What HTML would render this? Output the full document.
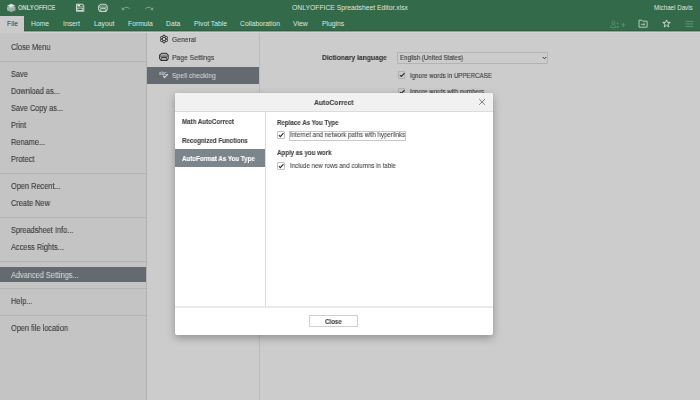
<!DOCTYPE html>
<html><head><meta charset="utf-8">
<style>
*{margin:0;padding:0;box-sizing:border-box}
html,body{width:700px;height:400px;overflow:hidden;background:#cccccc;font-family:"Liberation Sans",sans-serif;position:relative}
.a{position:absolute}
.t{position:absolute;white-space:nowrap;line-height:1;transform-origin:0 0;will-change:transform}
.t.l{will-change:auto}
svg{position:absolute;overflow:visible}
</style></head><body>
<div class="a" style="left:0.00px;top:0.00px;width:700.00px;height:30.00px;background:#336b4a;"></div>
<div class="a" style="left:0.00px;top:30.00px;width:700.00px;height:1.00px;background:#2c6242;"></div>
<div class="a" style="left:0.00px;top:31.00px;width:700.00px;height:1.00px;background:#8ea294;"></div>
<div class="a" style="left:0.00px;top:32.00px;width:700.00px;height:1.00px;background:#d4d4d4;"></div>
<div class="a" style="left:0.00px;top:16.00px;width:24.00px;height:17.00px;background:#cacaca;"></div>
<div class="t" style="left:18.00px;top:5.00px;font-size:6.446px;font-weight:bold;color:#d3ddd6;transform:scaleX(0.9091);">ONLY</div>
<div class="t" style="left:33.70px;top:5.00px;font-size:6.446px;font-weight:bold;color:#c2d1c7;transform:scaleX(0.9091);">OFFICE</div>
<div class="t l" style="left:292.20px;top:4.00px;font-size:7.605px;font-weight:normal;color:#dde6e0;transform:scaleX(0.8929);">ONLYOFFICE Spreadsheet Editor.xlsx</div>
<div class="t l" style="left:654.40px;top:4.00px;font-size:6.989px;font-weight:normal;color:#dde6e0;transform:scaleX(0.8929);">Michael Davis</div>
<div class="t l" style="left:6.75px;top:20.00px;font-size:7.605px;font-weight:normal;color:#3a3a3a;transform:scaleX(0.8929);">File</div>
<div class="t l" style="left:31.25px;top:20.00px;font-size:7.605px;font-weight:normal;color:#dde6e0;transform:scaleX(0.8929);">Home</div>
<div class="t l" style="left:62.50px;top:20.00px;font-size:7.605px;font-weight:normal;color:#dde6e0;transform:scaleX(0.8929);">Insert</div>
<div class="t l" style="left:93.50px;top:20.00px;font-size:7.605px;font-weight:normal;color:#dde6e0;transform:scaleX(0.8929);">Layout</div>
<div class="t l" style="left:127.50px;top:20.00px;font-size:7.605px;font-weight:normal;color:#dde6e0;transform:scaleX(0.8929);">Formula</div>
<div class="t l" style="left:165.50px;top:20.00px;font-size:7.605px;font-weight:normal;color:#dde6e0;transform:scaleX(0.8929);">Data</div>
<div class="t l" style="left:193.75px;top:20.00px;font-size:7.605px;font-weight:normal;color:#dde6e0;transform:scaleX(0.8929);">Pivot Table</div>
<div class="t l" style="left:240.00px;top:20.00px;font-size:7.605px;font-weight:normal;color:#dde6e0;transform:scaleX(0.8929);">Collaboration</div>
<div class="t l" style="left:293.25px;top:20.00px;font-size:7.605px;font-weight:normal;color:#dde6e0;transform:scaleX(0.8929);">View</div>
<div class="t l" style="left:321.50px;top:20.00px;font-size:7.605px;font-weight:normal;color:#dde6e0;transform:scaleX(0.8929);">Plugins</div>
<svg style="left:6px;top:3px" width="11" height="10" viewBox="0 0 11 10">
<path d="M1 3.8V7.2L5.2 9L9.4 7.2V3.8Z" fill="#a8bdb0"/>
<path d="M5.2 0.8L9.4 2.7L5.2 4.6L1 2.7Z" fill="#dde3df"/>
<path d="M1 4.5L5.2 6.4L9.4 4.5M1 6.3L5.2 8.2L9.4 6.3" stroke="#7a9d87" stroke-width="0.5" fill="none"/>
</svg>
<svg style="left:73px;top:2px" width="14" height="12" viewBox="0 0 14 12">
<path d="M3.5 2.3H9.5L10.8 3.6V9.3H3.5Z" stroke="#c6d4cb" stroke-width="1.05" fill="none"/>
<rect x="4.5" y="2.6" width="2.6" height="1.5" fill="#e9eeea"/>
<path d="M4 4.9H10.3" stroke="#c6d4cb" stroke-width="0.8"/>
<rect x="4.3" y="5.9" width="5.6" height="3.2" fill="#c6d4cb"/>
<rect x="5.2" y="6.6" width="3.8" height="1.4" rx="0.5" fill="#336b4a"/>
</svg>
<svg style="left:96px;top:2px" width="14" height="12" viewBox="0 0 14 12"><path d="M4.6 2.3H9.4L11.2 4.1V7.6L9.9 9.4H4.1L2.6 7.6V4.1Z" stroke="#c6d4cb" stroke-width="1.05" fill="none" stroke-linejoin="round"/><path d="M5 3.7H9" stroke="#c6d4cb" stroke-width="0.6" opacity="0.6"/><path d="M3 5.1H10.8" stroke="#c6d4cb" stroke-width="0.9"/><rect x="4.8" y="6.5" width="4.4" height="2.9" stroke="#c6d4cb" stroke-width="0.9" fill="none"/><path d="M7 6.8V9.2" stroke="#c6d4cb" stroke-width="0.5" opacity="0.7"/></svg>
<svg style="left:120.5px;top:5px" width="10" height="6" viewBox="0 0 10 6"><path d="M1.8 4.2C3.4 1.8 6.6 1.6 8.8 4" stroke="#7ea48b" stroke-width="1" fill="none"/><path d="M0.5 2.2L1.1 5.3L4.1 4.5Z" fill="#7ea48b"/></svg>
<svg style="left:143.5px;top:5px" width="10" height="6" viewBox="0 0 10 6"><path d="M8.2 4.2C6.6 1.8 3.4 1.6 1.2 4" stroke="#7ea48b" stroke-width="1" fill="none"/><path d="M9.5 2.2L8.9 5.3L5.9 4.5Z" fill="#7ea48b"/></svg>
<svg style="left:609.5px;top:19.5px" width="17" height="9" viewBox="0 0 17 9">
<circle cx="3.3" cy="2.4" r="1.5" stroke="#5f8e71" stroke-width="0.8" fill="none"/>
<path d="M0.6 7.6C0.8 5.4 1.9 4.7 3.3 4.7S5.9 5.4 6.1 7.6Z" stroke="#5f8e71" stroke-width="0.8" fill="none"/>
<circle cx="7.6" cy="3.4" r="0.9" fill="#5f8e71"/><circle cx="7.9" cy="6.9" r="1" fill="#5f8e71"/>
<path d="M11.4 5H15.4M13.4 3V7" stroke="#5f8e71" stroke-width="0.9"/></svg>
<svg style="left:638.4px;top:19.2px" width="10" height="9" viewBox="0 0 10 9"><path d="M1 1.2H3.9L4.9 2.2H9.1V8.2H1Z" stroke="#c6d4cb" stroke-width="0.9" fill="none"/><path d="M2.9 5.3H6.9M5.5 4L6.9 5.3L5.5 6.6" stroke="#c6d4cb" stroke-width="0.8" fill="none"/></svg>
<svg style="left:661.5px;top:19.3px" width="9" height="9" viewBox="0 0 9 9"><path d="M4.5 0.9L5.4 3.3L8.3 3.4L6 5.1L6.8 8L4.5 6.4L2.2 8L3 5.1L0.7 3.4L3.6 3.3Z" stroke="#c6d4cb" stroke-width="1" fill="none" stroke-linejoin="round"/></svg>
<svg style="left:684.5px;top:20px" width="9" height="8" viewBox="0 0 9 8"><path d="M0.4 1.4H8.1M0.4 3.9H8.1M0.4 6.4H8.1" stroke="#6f9a80" stroke-width="0.8"/></svg>
<div class="a" style="left:0.00px;top:33.00px;width:146.20px;height:367.00px;background:#c4c4c4;"></div>
<div class="a" style="left:146.20px;top:33.00px;width:1.00px;height:367.00px;background:#b2b2b2;"></div>
<div class="a" style="left:0.00px;top:61.00px;width:146.20px;height:1.00px;background:#b4b4b4;"></div>
<div class="a" style="left:0.00px;top:173.00px;width:146.20px;height:1.00px;background:#b4b4b4;"></div>
<div class="a" style="left:0.00px;top:217.30px;width:146.20px;height:1.00px;background:#b4b4b4;"></div>
<div class="a" style="left:0.00px;top:261.10px;width:146.20px;height:1.00px;background:#b4b4b4;"></div>
<div class="a" style="left:0.00px;top:288.10px;width:146.20px;height:1.00px;background:#b4b4b4;"></div>
<div class="a" style="left:0.00px;top:315.30px;width:146.20px;height:1.00px;background:#b4b4b4;"></div>
<div class="a" style="left:0.00px;top:267.00px;width:146.20px;height:15.20px;background:#646a70;"></div>
<div class="t" style="left:11.20px;top:44.00px;font-size:8.288px;font-weight:normal;color:#3a3a3a;transform:scaleX(0.8929);-webkit-text-stroke:0.12px #3a3a3a;">Close Menu</div>
<div class="t" style="left:11.20px;top:71.00px;font-size:8.288px;font-weight:normal;color:#3a3a3a;transform:scaleX(0.8929);-webkit-text-stroke:0.12px #3a3a3a;">Save</div>
<div class="t" style="left:11.20px;top:88.00px;font-size:8.288px;font-weight:normal;color:#3a3a3a;transform:scaleX(0.8929);-webkit-text-stroke:0.12px #3a3a3a;">Download as...</div>
<div class="t" style="left:11.20px;top:105.00px;font-size:8.288px;font-weight:normal;color:#3a3a3a;transform:scaleX(0.8929);-webkit-text-stroke:0.12px #3a3a3a;">Save Copy as...</div>
<div class="t" style="left:11.20px;top:122.00px;font-size:8.288px;font-weight:normal;color:#3a3a3a;transform:scaleX(0.8929);-webkit-text-stroke:0.12px #3a3a3a;">Print</div>
<div class="t" style="left:11.20px;top:139.00px;font-size:8.288px;font-weight:normal;color:#3a3a3a;transform:scaleX(0.8929);-webkit-text-stroke:0.12px #3a3a3a;">Rename...</div>
<div class="t" style="left:11.20px;top:156.00px;font-size:8.288px;font-weight:normal;color:#3a3a3a;transform:scaleX(0.8929);-webkit-text-stroke:0.12px #3a3a3a;">Protect</div>
<div class="t" style="left:11.20px;top:183.00px;font-size:8.288px;font-weight:normal;color:#3a3a3a;transform:scaleX(0.8929);-webkit-text-stroke:0.12px #3a3a3a;">Open Recent...</div>
<div class="t" style="left:11.20px;top:200.00px;font-size:8.288px;font-weight:normal;color:#3a3a3a;transform:scaleX(0.8929);-webkit-text-stroke:0.12px #3a3a3a;">Create New</div>
<div class="t" style="left:11.20px;top:227.00px;font-size:8.288px;font-weight:normal;color:#3a3a3a;transform:scaleX(0.8929);-webkit-text-stroke:0.12px #3a3a3a;">Spreadsheet Info...</div>
<div class="t" style="left:11.20px;top:244.00px;font-size:8.288px;font-weight:normal;color:#3a3a3a;transform:scaleX(0.8929);-webkit-text-stroke:0.12px #3a3a3a;">Access Rights...</div>
<div class="t" style="left:11.20px;top:298.00px;font-size:8.288px;font-weight:normal;color:#3a3a3a;transform:scaleX(0.8929);-webkit-text-stroke:0.12px #3a3a3a;">Help...</div>
<div class="t" style="left:11.20px;top:325.00px;font-size:8.288px;font-weight:normal;color:#3a3a3a;transform:scaleX(0.8929);-webkit-text-stroke:0.12px #3a3a3a;">Open file location</div>
<div class="t" style="left:11.20px;top:272.00px;font-size:8.288px;font-weight:normal;color:#d0d0d0;transform:scaleX(0.8929);-webkit-text-stroke:0.12px #d0d0d0;">Advanced Settings...</div>
<div class="a" style="left:147.20px;top:33.00px;width:111.80px;height:367.00px;background:#cccccc;"></div>
<div class="a" style="left:259.00px;top:33.00px;width:1.00px;height:367.00px;background:#bcbcbc;"></div>
<div class="a" style="left:147.20px;top:66.80px;width:111.80px;height:16.90px;background:#646a70;"></div>
<div class="t" style="left:172.20px;top:36.00px;font-size:7.605px;font-weight:normal;color:#3a3a3a;transform:scaleX(0.8929);-webkit-text-stroke:0.12px #3a3a3a;">General</div>
<div class="t" style="left:172.20px;top:54.00px;font-size:7.605px;font-weight:normal;color:#3a3a3a;transform:scaleX(0.8929);-webkit-text-stroke:0.12px #3a3a3a;">Page Settings</div>
<div class="t" style="left:172.20px;top:72.00px;font-size:7.605px;font-weight:normal;color:#d0d0d0;transform:scaleX(0.8929);-webkit-text-stroke:0.12px #d0d0d0;">Spell checking</div>
<svg style="left:158.9px;top:34.4px" width="10" height="10" viewBox="0 0 10 10"><circle cx="5.00" cy="2.40" r="1.3" stroke="#2f2f2f" stroke-width="1" fill="none"/><circle cx="7.25" cy="3.70" r="1.3" stroke="#2f2f2f" stroke-width="1" fill="none"/><circle cx="7.25" cy="6.30" r="1.3" stroke="#2f2f2f" stroke-width="1" fill="none"/><circle cx="5.00" cy="7.60" r="1.3" stroke="#2f2f2f" stroke-width="1" fill="none"/><circle cx="2.75" cy="6.30" r="1.3" stroke="#2f2f2f" stroke-width="1" fill="none"/><circle cx="2.75" cy="3.70" r="1.3" stroke="#2f2f2f" stroke-width="1" fill="none"/><circle cx="5" cy="5" r="1.9" fill="#cccccc"/><circle cx="5" cy="5" r="1.7" stroke="#2f2f2f" stroke-width="0.8" fill="none"/></svg>
<svg style="left:157px;top:50.8px" width="14" height="12" viewBox="0 0 14 12"><path d="M4.6 2.3H9.4L11.2 4.1V7.6L9.9 9.4H4.1L2.6 7.6V4.1Z" stroke="#2f2f2f" stroke-width="1.05" fill="none" stroke-linejoin="round"/><path d="M5 3.7H9" stroke="#2f2f2f" stroke-width="0.6" opacity="0.6"/><path d="M3 5.1H10.8" stroke="#2f2f2f" stroke-width="0.9"/><rect x="4.8" y="6.5" width="4.4" height="2.9" stroke="#2f2f2f" stroke-width="0.9" fill="none"/><path d="M7 6.8V9.2" stroke="#2f2f2f" stroke-width="0.5" opacity="0.7"/></svg>
<svg style="left:159px;top:70.4px;will-change:transform" width="10" height="9" viewBox="0 0 10 9">
<text x="0" y="4.6" font-family="Liberation Sans" font-weight="bold" font-size="4.6" letter-spacing="-0.15" fill="#c4c4c4">abc</text>
<path d="M4.2 5.6L5.5 7.6L8.9 4" stroke="#d8d8d8" stroke-width="1.1" fill="none"/></svg>
<div class="t" style="left:321.70px;top:54.00px;font-size:7.605px;font-weight:bold;color:#363636;transform:scaleX(0.8929);-webkit-text-stroke:0.12px #363636;">Dictionary language</div>
<div class="a" style="left:397.20px;top:51.50px;width:150.60px;height:12.20px;background:#cccccc;border:1px solid #b3b3b3;border-radius:1px"></div>
<div class="t" style="left:400.20px;top:55.00px;font-size:6.910px;font-weight:normal;color:#363636;transform:scaleX(0.8929);-webkit-text-stroke:0.10px #363636;">English (United States)</div>
<svg style="left:541.5px;top:56px" width="5" height="4" viewBox="0 0 5 4"><path d="M0.8 1L2.5 2.8L4.2 1" stroke="#333" stroke-width="1" fill="none"/></svg>
<div class="a" style="left:397.60px;top:71.30px;width:7.90px;height:7.90px;background:#cccccc;border:1px solid #b0b0b0;border-radius:1px"></div>
<svg style="left:397.6px;top:71.30px" width="8" height="8" viewBox="0 0 8 8"><path d="M1.9 4.1L3.3 5.5L6.5 2.1" stroke="#2e2e2e" stroke-width="1.15" fill="none"/></svg>
<div class="t" style="left:409.90px;top:73.00px;font-size:6.910px;font-weight:normal;color:#363636;transform:scaleX(0.8929);-webkit-text-stroke:0.10px #363636;">Ignore words in UPPERCASE</div>
<div class="a" style="left:397.60px;top:87.90px;width:7.90px;height:7.90px;background:#cccccc;border:1px solid #b0b0b0;border-radius:1px"></div>
<svg style="left:397.6px;top:87.90px" width="8" height="8" viewBox="0 0 8 8"><path d="M1.9 4.1L3.3 5.5L6.5 2.1" stroke="#2e2e2e" stroke-width="1.15" fill="none"/></svg>
<div class="t" style="left:409.90px;top:89.00px;font-size:6.910px;font-weight:normal;color:#363636;transform:scaleX(0.8929);-webkit-text-stroke:0.10px #363636;">Ignore words with numbers</div>
<div class="a" style="left:175.00px;top:92.60px;width:317.60px;height:242.00px;background:#ffffff;border-radius:2px;box-shadow:0 3px 9px rgba(0,0,0,0.3)"></div>
<div class="a" style="left:175.00px;top:92.60px;width:317.60px;height:18.30px;background:#f1f1f1;border-radius:2px 2px 0 0"></div>
<div class="a" style="left:175.00px;top:110.90px;width:317.60px;height:1.00px;background:#dcdcdc;"></div>
<div class="t" style="left:314.00px;top:99.00px;font-size:7.605px;font-weight:bold;color:#444444;transform:scaleX(0.8929);-webkit-text-stroke:0.12px #444444;">AutoCorrect</div>
<svg style="left:478px;top:98px" width="8" height="8" viewBox="0 0 8 8"><path d="M1.2 1L7 6.8M7 1L1.2 6.8" stroke="#707070" stroke-width="0.9" fill="none"/></svg>
<div class="a" style="left:175.00px;top:149.30px;width:90.00px;height:17.40px;background:#7d858c;"></div>
<div class="a" style="left:265.20px;top:111.50px;width:1.00px;height:195.20px;background:#dcdcdc;"></div>
<div class="t" style="left:182.20px;top:119.00px;font-size:6.910px;font-weight:bold;color:#444444;transform:scaleX(0.8929);-webkit-text-stroke:0.12px #444444;">Math AutoCorrect</div>
<div class="t" style="left:182.40px;top:138.00px;font-size:6.910px;font-weight:bold;color:#444444;transform:scaleX(0.8929);-webkit-text-stroke:0.12px #444444;">Recognized Functions</div>
<div class="t" style="left:182.20px;top:156.00px;font-size:6.910px;font-weight:bold;color:#ffffff;transform:scaleX(0.8929);-webkit-text-stroke:0.12px #ffffff;">AutoFormat As You Type</div>
<div class="t" style="left:277.20px;top:120.00px;font-size:6.910px;font-weight:bold;color:#444444;transform:scaleX(0.8929);-webkit-text-stroke:0.12px #444444;">Replace As You Type</div>
<div class="t" style="left:277.20px;top:150.00px;font-size:6.910px;font-weight:bold;color:#444444;transform:scaleX(0.8929);-webkit-text-stroke:0.12px #444444;">Apply as you work</div>
<div class="a" style="left:277.30px;top:131.20px;width:7.90px;height:8.30px;background:#ffffff;border:1px solid #c2c2c2;border-radius:1px"></div>
<svg style="left:277.3px;top:131.20px" width="8" height="8" viewBox="0 0 8 8"><path d="M1.9 4.2L3.3 5.6L6.5 2.1" stroke="#303030" stroke-width="1.15" fill="none"/></svg>
<div class="a" style="left:277.30px;top:161.90px;width:7.90px;height:8.30px;background:#ffffff;border:1px solid #c2c2c2;border-radius:1px"></div>
<svg style="left:277.3px;top:161.90px" width="8" height="8" viewBox="0 0 8 8"><path d="M1.9 4.2L3.3 5.6L6.5 2.1" stroke="#303030" stroke-width="1.15" fill="none"/></svg>
<div class="a" style="left:288.70px;top:131.00px;width:117.20px;height:9.80px;background:transparent;border:1px solid #c8c8c8"></div>
<div class="t" style="left:290.00px;top:132.00px;font-size:6.910px;font-weight:normal;color:#444444;transform:scaleX(0.8929);-webkit-text-stroke:0.08px #444444;">Internet and network paths with hyperlinks</div>
<div class="t" style="left:290.00px;top:163.00px;font-size:6.910px;font-weight:normal;color:#444444;transform:scaleX(0.8929);-webkit-text-stroke:0.08px #444444;">Include new rows and columns in table</div>
<div class="a" style="left:175.00px;top:306.00px;width:317.60px;height:1.90px;background:#ebebeb;"></div>
<div class="a" style="left:309.30px;top:315.20px;width:48.50px;height:12.20px;background:#ffffff;border:1px solid #d0d0d0"></div>
<div class="t" style="left:325.00px;top:319.00px;font-size:6.910px;font-weight:bold;color:#444444;transform:scaleX(0.8929);-webkit-text-stroke:0.12px #444444;">Close</div>
</body></html>
